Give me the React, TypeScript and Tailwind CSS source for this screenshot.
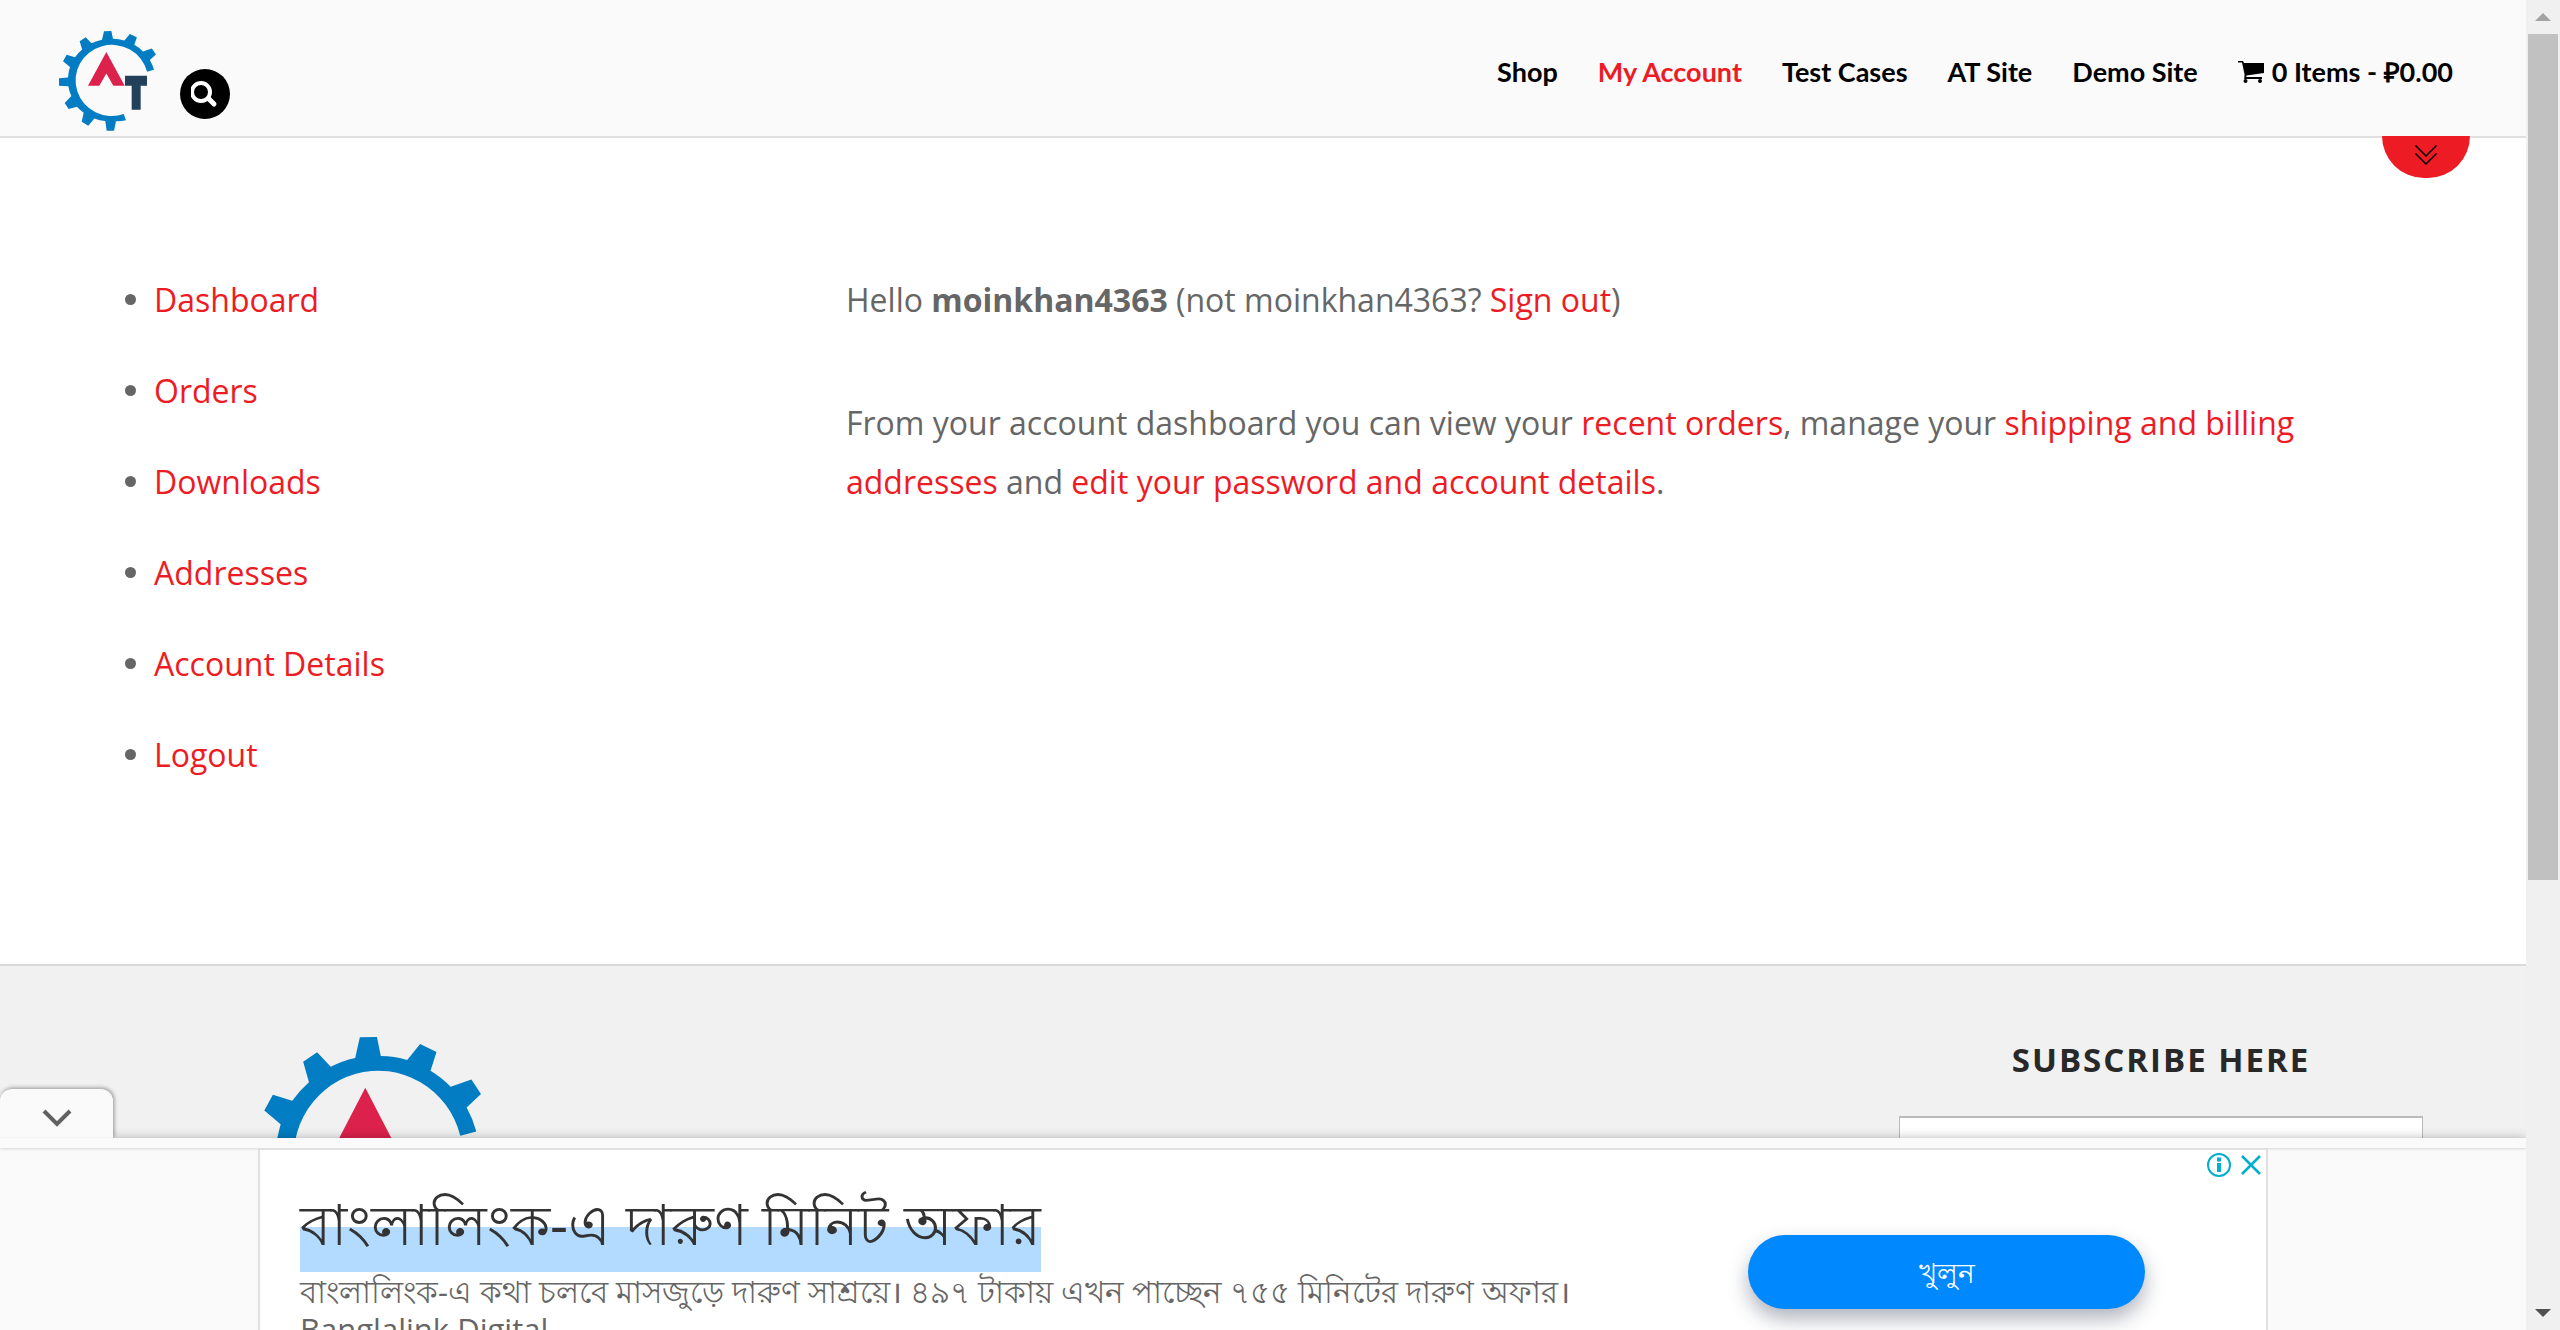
import type { ReactNode } from "react";

const navItems = [
  { label: "Shop" },
  { label: "My Account", active: true },
  { label: "Test Cases" },
  { label: "AT Site" },
  { label: "Demo Site" },
];

const accountLinks = ["Dashboard", "Orders", "Downloads", "Addresses", "Account Details", "Logout"];

function Logo({ className }: { className: string }) {
  return (
    <svg viewBox="57 63 291 301" preserveAspectRatio="none" className={className} role="img" aria-label="AT logo">
      <path
        fill="#027dc3"
        d="M186 89 192 63.4 214 63 219 86.6A126 126 0 0 1 253 91.5L269.6 71.7 290.7 81.6 283 104.7A126 126 0 0 1 309 124.6L335.6 115.5 348 133.7 329.5 150.2A126 126 0 0 1 342 180L321.3 185.3A109 107 0 1 0 251 313L258 332A126 126 0 0 1 228 335L222 363H200L196 334A126 126 0 0 1 163 326L145 348 125 336 131 309A126 126 0 0 1 111 291L86 298 74 280 94 259A126 126 0 0 1 85 229L57 228V205L84 203A126 126 0 0 1 90 171L69 154 80 134.5 105 142A126 126 0 0 1 126.5 119L119 93.6 137 82 154.5 100A126 126 0 0 1 186 89Z"
      />
      <path fill="#dc214c" d="M199 126 254 228H220L199 191 178 228H144Z" />
      <path fill="#22405a" d="M255 198H321V228H302V300H275V228H255Z" />
    </svg>
  );
}

function CartIcon() {
  return (
    <svg viewBox="0 0 26 24" className="h-6 w-[26px]" fill="currentColor" aria-hidden="true">
      <path d="M0 1h5l1 2h20v10L8.500 15.500 8.200 17H24v2H6.200L6.600 14.500 4 2.600H0Z" />
      <circle cx="7.500" cy="21" r="2" />
      <circle cx="22" cy="21" r="2" />
    </svg>
  );
}

function RedLink({ children }: { children: ReactNode }) {
  return (
    <a href="#" className="text-[#ed1c24]">
      {children}
    </a>
  );
}

function Header() {
  return (
    <header className="relative flex h-[138px] items-start justify-between border-b-2 border-[#e0e0e0] bg-[#fafafa] pl-[59px] pr-[73px]">
      <div className="flex items-start gap-6 pt-[31px]">
        <a href="#">
          <Logo className="h-[100px] w-[97px]" />
        </a>
        <button aria-label="Search" className="mt-[38px] flex size-[50px] items-center justify-center rounded-full bg-black">
          <svg viewBox="0 0 28 28" className="size-7" fill="none" stroke="#fff" strokeWidth="4" strokeLinecap="round">
            <circle cx="10" cy="12" r="9" />
            <path strokeWidth="5" d="m18 19 5 5" />
          </svg>
        </button>
      </div>
      <nav className="flex gap-10 pt-[52px] font-[Lato,sans-serif] text-[27px] leading-10 font-bold text-black">
        {navItems.map((item) => (
          <a key={item.label} href="#" className={item.active ? "text-[#ed1c24]" : ""}>
            {item.label}
          </a>
        ))}
        <a href="#" className="flex items-center gap-2">
          <CartIcon />
          0 Items - ₽0.00
        </a>
      </nav>
      <button
        aria-label="Show more"
        className="absolute top-[136px] right-14 flex h-[42px] w-[88px] items-start justify-center rounded-b-full bg-[#ed1c24] pt-[9px]"
      >
        <svg viewBox="0 0 22 20" className="h-5 w-[22px]" fill="none" stroke="#000" strokeWidth="1.500">
          <path d="m.5.500 10.500 10.500L21.500.500M.5 8.500 11 19 21.500 8.500" />
        </svg>
      </button>
    </header>
  );
}

function Account() {
  return (
    <main className="flex bg-white pt-[132px] pr-[125px] pb-[148px] pl-[125px] text-[32px] leading-[59px] text-[#666]">
      <ul className="w-[721px] shrink-0">
        {accountLinks.map((label) => (
          <li key={label} className="mb-8 flex items-center gap-[18px]">
            <span className="size-[11px] rounded-full bg-[#666]" />
            <RedLink>{label}</RedLink>
          </li>
        ))}
      </ul>
      <div className="flex-1">
        <p className="mb-16">
          Hello <strong className="font-bold">moinkhan4363</strong> (not moinkhan4363? <RedLink>Sign out</RedLink>)
        </p>
        <p>
          From your account dashboard you can view your <RedLink>recent orders</RedLink>, manage your{" "}
          <RedLink>shipping and billing addresses</RedLink> and{" "}
          <RedLink>edit your password and account details</RedLink>.
        </p>
      </div>
    </main>
  );
}

function Footer() {
  return (
    <footer className="flex flex-1 justify-between border-t-2 border-[#dadada] bg-[#f1f1f1] pr-[103px] pl-[255px]">
      <Logo className="mt-[71px] h-[243px] w-[226px]" />
      <form className="flex w-[524px] flex-col pt-[66px]">
        <label htmlFor="email" className="mb-7 text-center text-[33px] leading-[56px] font-bold tracking-[2px] text-[#282828]">
          SUBSCRIBE HERE
        </label>
        <input id="email" type="email" className="h-[72px] border border-t-2 border-[#bbb] bg-white px-4" />
      </form>
    </footer>
  );
}

function AdBanner() {
  return (
    <aside className="absolute inset-x-0 bottom-0 h-48 bg-[#fafafa] shadow-[0_0_10px_rgba(0,0,0,0.25)]">
      <button
        aria-label="Hide advertisement"
        className="absolute bottom-full left-0 flex h-[49px] w-[113px] items-center justify-center rounded-t-xl bg-[#fafafa] pt-2 shadow-[1px_-1px_4px_rgba(0,0,0,0.4)]"
      >
        <svg viewBox="0 0 30 18" className="h-[18px] w-[30px]" fill="none" stroke="#616161" strokeWidth="4">
          <path d="m2 2 13 13L28 2" />
        </svg>
      </button>
      <div className="relative flex h-full flex-col bg-[#fafafa]">
        <div className="h-2.5 shrink-0 shadow-[0_1px_3px_rgba(0,0,0,0.15)]" />
        <div className="mr-[258px] ml-[258px] flex flex-1 overflow-hidden border-x-2 border-t-2 border-[#e0e0e0] bg-white">
          <div className="min-w-0 flex-1 pt-[32px] pl-10">
            <h2 className="h-[90px] text-[56px] leading-[82px] whitespace-nowrap text-[#333]">
              <a href="#" className="inline-block h-[90px] bg-[linear-gradient(#fff_50%,#b3daff_50%)]">
                বাংলালিংক-এ দারুণ মিনিট অফার
              </a>
            </h2>
            <p className="text-[31px] leading-[38px] whitespace-nowrap text-[#666]">
              বাংলালিংক-এ কথা চলবে মাসজুড়ে দারুণ সাশ্রয়ে। ৪৯৭ টাকায় এখন পাচ্ছেন ৭৫৫ মিনিটের দারুণ অফার।
              <br />
              Banglalink Digital
            </p>
          </div>
          <div className="flex w-[518px] flex-col items-start">
            <div className="flex gap-2 self-end pt-[3px] pr-[3px]">
              <button aria-label="Ad information">
                <svg viewBox="0 0 24 24" className="size-6" fill="none" stroke="#00aecd" strokeWidth="2">
                  <circle cx="12" cy="12" r="11" />
                  <path strokeWidth="4" d="M12 10v9M12 4.500v4" />
                </svg>
              </button>
              <button aria-label="Close advertisement">
                <svg viewBox="0 0 24 24" className="size-6" fill="none" stroke="#00aecd" strokeWidth="2.500">
                  <path d="m3 3 18 18M21 3 3 21" />
                </svg>
              </button>
            </div>
            <button className="mt-[58px] h-[74px] w-[397px] shrink-0 rounded-full bg-[#0088ff] text-[28px] font-medium text-white shadow-[0_10px_20px_rgba(30,40,70,0.35)]">
              খুলুন
            </button>
          </div>
        </div>
      </div>
    </aside>
  );
}

function ScrollBar() {
  return (
    <div className="flex w-[34px] shrink-0 flex-col items-center bg-[#f0f0f0]" aria-hidden="true">
      <div className="flex h-[34px] items-center">
        <svg viewBox="0 0 16 8" className="h-2 w-4" fill="#a3a3a3">
          <path d="M0 8 8 0l8 8Z" />
        </svg>
      </div>
      <div className="h-[846px] w-[30px] bg-[#c1c1c1]" />
      <div className="mt-auto flex h-[34px] items-center">
        <svg viewBox="0 0 16 8" className="h-2 w-4" fill="#505050">
          <path d="M0 0h16L8 8Z" />
        </svg>
      </div>
    </div>
  );
}

export default function App() {
  return (
    <div className="flex h-screen overflow-hidden font-['Open_Sans','Noto_Sans',sans-serif]">
      <div className="relative flex min-w-0 flex-1 flex-col overflow-hidden">
        <Header />
        <Account />
        <Footer />
        <AdBanner />
      </div>
      <ScrollBar />
    </div>
  );
}
